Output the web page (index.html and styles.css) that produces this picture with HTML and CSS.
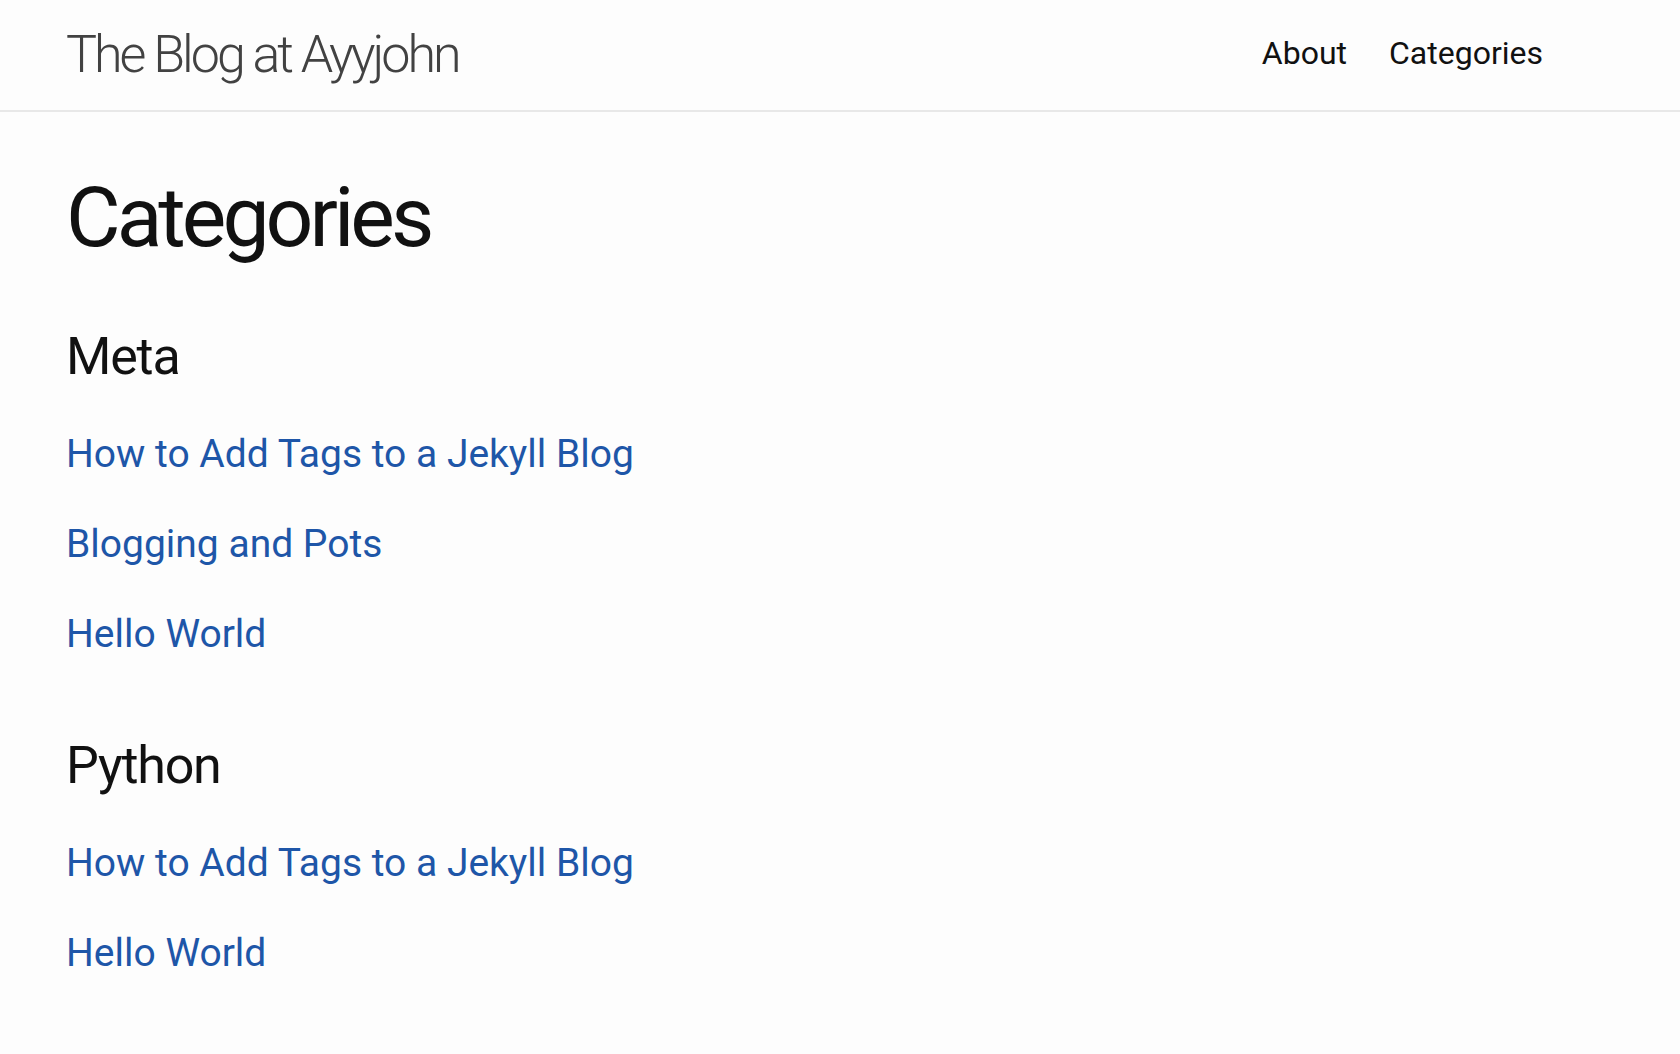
FILE: index.html
```html
<!DOCTYPE html>
<html lang="en">
<head>
<meta charset="utf-8">
<title>Categories | The Blog at Ayyjohn</title>
<link rel="stylesheet" href="styles.css">
</head>
<body>
<header class="site-header">
  <div class="header-inner">
    <a class="site-title" href="#">The Blog at Ayyjohn</a>
    <nav class="site-nav">
      <a class="page-link" href="#">About</a>
      <a class="page-link" href="#">Categories</a>
    </nav>
  </div>
</header>
<main class="page-content">
  <h1 class="post-title">Categories</h1>
  <section class="category">
    <h2 class="category-name">Meta</h2>
    <ul class="post-list">
      <li><a href="#">How to Add Tags to a Jekyll Blog</a></li>
      <li><a href="#">Blogging and Pots</a></li>
      <li><a href="#">Hello World</a></li>
    </ul>
  </section>
  <section class="category">
    <h2 class="category-name">Python</h2>
    <ul class="post-list">
      <li><a href="#">How to Add Tags to a Jekyll Blog</a></li>
      <li><a href="#">Hello World</a></li>
    </ul>
  </section>
</main>
</body>
</html>
```
FILE: styles.css
```css
* { box-sizing: border-box; }
html, body { margin: 0; padding: 0; }
body {
  background: #fdfdfd;
  color: #111111;
  font-family: Roboto, "Noto Sans", "Liberation Sans", sans-serif;
  font-weight: 400;
}
a { text-decoration: none; }

.site-header {
  border-bottom: 2px solid #e8e8e8;
}
.header-inner {
  display: flex;
  justify-content: space-between;
  align-items: flex-start;
  height: 110px;
  padding: 0 137px 0 66px;
}
.site-title {
  padding-top: 1px;
  font-size: 52px;
  font-weight: 300;
  letter-spacing: -3px;
  line-height: 108px;
  color: #424242;
}
.site-nav {
  display: flex;
  gap: 42px;
}
.page-link {
  padding-top: 1px;
  font-size: 32px;
  line-height: 104px;
  color: #111111;
}

.page-content {
  padding: 64px 66px 40px;
}
.post-title {
  margin: 0 0 66px;
  font-size: 84px;
  font-weight: 400;
  line-height: 1;
  letter-spacing: -4px;
}
.category {
  margin-bottom: 71px;
}
.category-name {
  margin: 0 0 37px;
  font-size: 52px;
  font-weight: 400;
  line-height: 1.2;
  letter-spacing: -1.2px;
}
.post-list {
  list-style: none;
  margin: 0;
  padding: 0;
  display: flex;
  flex-direction: column;
  gap: 31.5px;
}
.post-list li {
  font-size: 39px;
  line-height: 58.5px;
}
.post-list a {
  color: #1e56a8;
}
```
